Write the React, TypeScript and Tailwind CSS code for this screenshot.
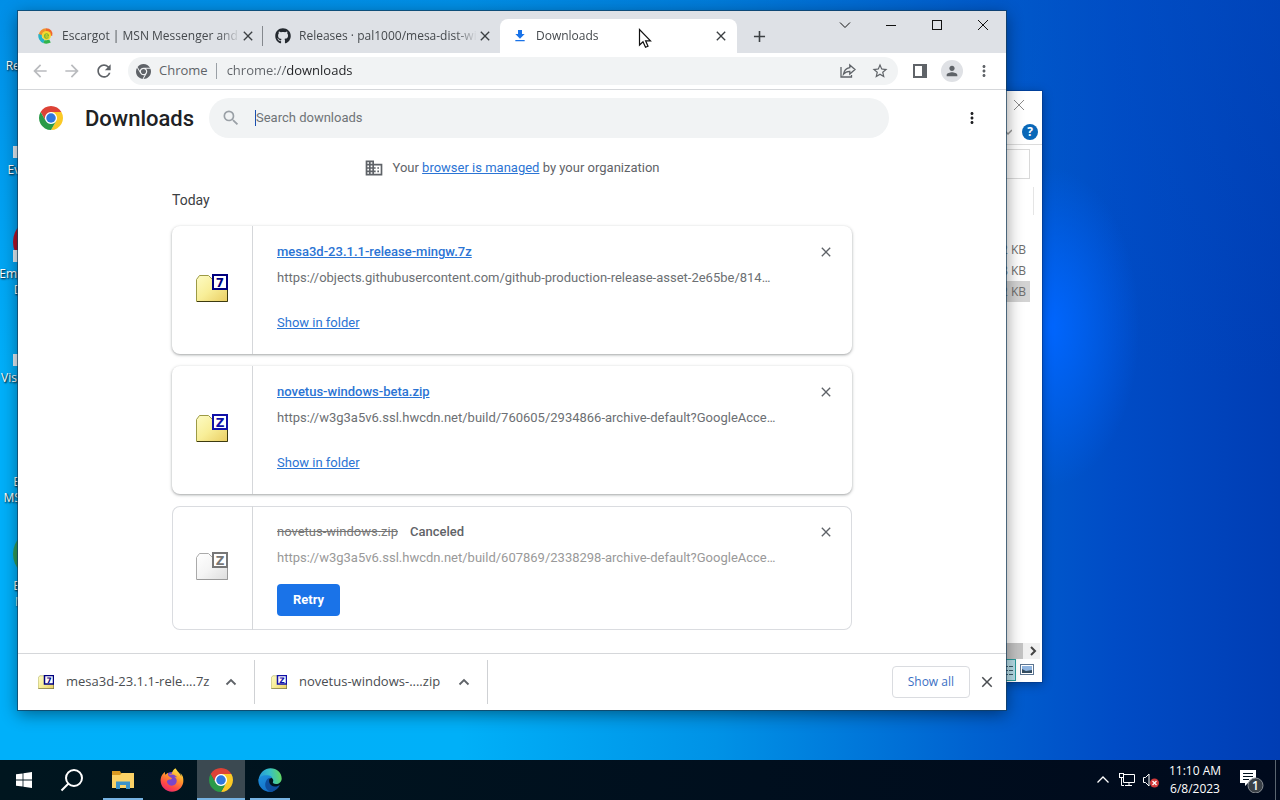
import type { ReactNode } from 'react';
import { FaChrome, FaFirefoxBrowser, FaGithub } from 'react-icons/fa6';
import {
  MdAdd,
  MdArrowBack,
  MdArrowForward,
  MdClose,
  MdDomain,
  MdFileDownload,
  MdMoreVert,
  MdPerson,
  MdRefresh,
  MdSearch,
  MdStarBorder,
} from 'react-icons/md';

interface DownloadEntry {
  name: string;
  url: string;
  letter: string;
  canceled?: boolean;
}

const downloads: DownloadEntry[] = [
  {
    name: 'mesa3d-23.1.1-release-mingw.7z',
    url: 'https://objects.githubusercontent.com/github-production-release-asset-2e65be/814…',
    letter: '7',
  },
  {
    name: 'novetus-windows-beta.zip',
    url: 'https://w3g3a5v6.ssl.hwcdn.net/build/760605/2934866-archive-default?GoogleAcce…',
    letter: 'Z',
  },
  {
    name: 'novetus-windows.zip',
    url: 'https://w3g3a5v6.ssl.hwcdn.net/build/607869/2338298-archive-default?GoogleAcce…',
    letter: 'Z',
    canceled: true,
  },
];

const shortcuts = [
  { label: ['Recycle Bin'], icon: '' },
  { label: ['Everything'], icon: '', arrow: true },
  { label: ['Embarcadero', 'Dev-C++'], icon: 'bg-[#b3122a]', arrow: true },
  { label: ['Visual Studio'], icon: '', arrow: true },
  { label: ['Escargot', 'MSN Clients'], icon: '' },
  { label: ['Escargot', 'Msn 7.5'], icon: 'bg-[#2f9e5b]' },
];

function ChromeLogo({ size }: { size: number }) {
  return (
    <svg width={size} height={size} viewBox="0 0 48 48">
      <circle cx="24" cy="24" r="14" fill="#fff" />
      <path d="M24 12H44.78A24 24 0 0 0 3.22 12L13.6 30A12 12 0 0 1 24 12z" fill="#dd4236" />
      <path d="M24 12H44.78A24 24 0 0 1 24 48L34.4 30A12 12 0 0 0 24 12z" fill="#fbc926" />
      <path d="M34.4 30L24 48A24 24 0 0 1 3.22 12L13.6 30A12 12 0 0 0 34.4 30z" fill="#2b9a48" />
      <circle cx="24" cy="24" r="9.5" fill="#2f77dd" />
    </svg>
  );
}

function ArchiveIcon({ letter, gray, small }: { letter: string; gray?: boolean; small?: boolean }) {
  const blue = letter === 'Z' ? '#1111a8' : '#00007f';
  const frame = gray ? '#777' : blue;
  const width = small ? 16 : 32;
  return (
    <svg width={width} height={(width * 28) / 32} viewBox="0 0 32 28">
      <defs>
        <linearGradient id={gray ? 'folderGray' : 'folderYellow'} x1="0" y1="0" x2="1" y2="1">
          <stop offset="0" stopColor={gray ? '#fff' : '#fdfbc4'} />
          <stop offset="0.5" stopColor={gray ? '#f4f4f4' : '#f8ee98'} />
          <stop offset="1" stopColor={gray ? '#ddd' : '#e9cd62'} />
        </linearGradient>
      </defs>
      <path
        d="M.5 5.500L3.500 1.500H12.500L16.500 5.500H31.500V27.500H.5z"
        fill={gray ? 'url(#folderGray)' : 'url(#folderYellow)'}
        stroke={gray ? '#aaa' : '#9c9a45'}
      />
      <path d="M1 27.500H31.500V15" fill="none" stroke={gray ? '#999' : '#3c3a10'} />
      <rect
        x={small ? 13 : 17}
        y="1"
        width={small ? 18 : 14}
        height={small ? 17 : 14}
        fill="#fff"
        stroke={frame}
        strokeWidth={small ? 3 : 2}
      />
      <text
        x={small ? 22 : 24}
        y={small ? 15.5 : 12.5}
        textAnchor="middle"
        fontFamily="DejaVu Sans, sans-serif"
        fontWeight="bold"
        fontSize={small ? 15 : 12}
        fill={frame}
      >
        {letter}
      </text>
    </svg>
  );
}

function EscargotIcon() {
  return (
    <svg width="16" height="16" viewBox="0 0 16 16" fill="none" strokeWidth="3.500">
      <path d="M8 2A6 6 0 0 0 2.300 7" stroke="#f0922b" />
      <path d="M2.200 6.500A6 6 0 0 0 6 13.500" stroke="#27b3c9" />
      <path d="M6 13.500C8.500 14.500 10 14 12 13" stroke="#31b44b" />
      <path d="M8 2C11.500 2 13.500 4.500 12.500 7.500" stroke="#f0672e" />
      <circle cx="8.500" cy="7.500" r="4.500" fill="#f5da2e" />
      <path d="M6.500 8H10.500C10.500 5 6.800 5 6.500 8C6.500 10.500 9 10.500 10.500 9.500" stroke="#7db82f" strokeWidth="1.200" />
    </svg>
  );
}

function EdgeLogo() {
  return (
    <svg width="24" height="24" viewBox="0 0 24 24">
      <defs>
        <linearGradient id="waveTop" x1="0" y1="0.6" x2="1" y2="0.5">
          <stop offset="0" stopColor="#2596d8" />
          <stop offset="0.5" stopColor="#35bfc9" />
          <stop offset="1" stopColor="#62d860" />
        </linearGradient>
        <linearGradient id="waveBody" x1="0.2" y1="0" x2="0.6" y2="1">
          <stop offset="0" stopColor="#1d8fdc" />
          <stop offset="1" stopColor="#1470c8" />
        </linearGradient>
      </defs>
      <path
        d="M.5 12C1.500 4.500 7 .3 12.500 .3C19 .3 23.700 5 23.700 10.500C23.700 14 21 16 18 16C15.500 16 14.300 15 15 13.800C16 12 14.500 9 10.500 8.500C6 8 2.500 9.500 .5 12z"
        fill="url(#waveTop)"
      />
      <path
        d="M.3 12.500C1 8.500 5 6.800 9.500 7.300C13 7.700 14.500 9.300 13.500 10C8.500 11 7.500 15 9 18C10.500 21 15 22 17 22.500C11 26 .8 22.500 .3 12.500z"
        fill="url(#waveBody)"
      />
      <path
        d="M12 9.800C10 13 11.500 18.500 17 18.500C19 18.500 20.500 17.800 21.800 17C20.500 20.500 17 23.300 12.800 23.700C8 22.500 6.500 18 7.500 14.500C8.200 12 9.800 10.200 12 9.800z"
        fill="#0e4f9f"
      />
    </svg>
  );
}

function Tab({ icon, title, active, divider }: { icon: ReactNode; title: string; active?: boolean; divider?: boolean }) {
  return (
    <div
      className={
        active
          ? 'flex h-[34px] w-[237px] min-w-0 items-center rounded-t-lg bg-white pr-2 pl-3'
          : 'flex h-[34px] w-[237px] min-w-0 items-center pl-3'
      }
    >
      <span className="mr-2 flex w-4 shrink-0 justify-center">{icon}</span>
      <span className="min-w-0 flex-1 overflow-hidden text-xs whitespace-nowrap text-[#45494d] [mask-image:linear-gradient(to_right,black_88%,transparent)]">
        {title}
      </span>
      <button aria-label="Close tab" className="shrink-0 text-[#3c4043]">
        <MdClose size={16} />
      </button>
      {!active && <span className={divider ? 'ml-1.5 h-5 w-px bg-[#84888d]' : 'ml-1.5 h-5 w-px'} />}
    </div>
  );
}

function WindowButton({ label, children }: { label: string; children: ReactNode }) {
  return (
    <button aria-label={label} className="flex h-7 w-[46px] items-center justify-center">
      <svg width="12" height="12" viewBox="0 0 12 12" fill="none" stroke="#111">
        {children}
      </svg>
    </button>
  );
}

function ToolbarButton({ label, children }: { label: string; children: ReactNode }) {
  return (
    <button aria-label={label} className="flex size-8 shrink-0 items-center justify-center text-[#5f6368]">
      {children}
    </button>
  );
}

function TabStrip() {
  return (
    <div className="flex h-[42px] shrink-0 bg-[#dee1e6] pl-2">
      <div className="flex min-w-0 flex-1 items-end">
        <Tab icon={<EscargotIcon />} title="Escargot | MSN Messenger and Y" divider />
        <Tab icon={<FaGithub size={16} className="text-[#24292f]" />} title="Releases · pal1000/mesa-dist-win" />
        <Tab icon={<MdFileDownload size={16} className="text-[#1a73e8]" />} title="Downloads" active />
        <button aria-label="New tab" className="flex h-[34px] w-11 shrink-0 items-center justify-center text-[#3c4043]">
          <MdAdd size={19} />
        </button>
      </div>
      <div className="flex shrink-0">
        <WindowButton label="Search tabs">
          <path d="M1 3.500L6 8.500L11 3.500" />
        </WindowButton>
        <WindowButton label="Minimize">
          <path d="M1 6.500H11" />
        </WindowButton>
        <WindowButton label="Maximize">
          <rect x="1.500" y="1.500" width="9" height="9" />
        </WindowButton>
        <WindowButton label="Close">
          <path d="M1 1L11 11M11 1L1 11" />
        </WindowButton>
      </div>
    </div>
  );
}

function Toolbar() {
  return (
    <div className="flex h-[37px] shrink-0 items-center border-b border-[#d5d7da] px-1.5">
      <button aria-label="Back" className="flex size-8 items-center justify-center text-[#b9bbbe]">
        <MdArrowBack size={20} />
      </button>
      <button aria-label="Forward" className="flex size-8 items-center justify-center text-[#b9bbbe]">
        <MdArrowForward size={20} />
      </button>
      <ToolbarButton label="Reload">
        <MdRefresh size={20} />
      </ToolbarButton>
      <div className="mr-1.5 ml-2 flex h-7 min-w-0 flex-1 items-center rounded-full bg-[#f1f3f4] pr-0.5 pl-2">
        <FaChrome size={15} className="text-[#5f6368]" />
        <label htmlFor="omnibox" className="ml-2 text-[13px] text-[#5f6368]">
          Chrome
        </label>
        <span className="mr-2.5 ml-2 h-4 w-px bg-[#9aa0a6]" />
        <input
          id="omnibox"
          defaultValue="chrome://downloads"
          className="min-w-0 flex-1 bg-linear-to-r from-[#5f6368] from-[58px] to-[#202124] to-[58px] bg-clip-text text-[13px] text-transparent outline-none"
        />
        <ToolbarButton label="Share">
          <svg width="16" height="16" viewBox="0 0 16 16" fill="none" stroke="currentColor" strokeWidth="1.300">
            <path d="M1 4V14H11.500V12M9.800 2L15 6.500L9.800 11V8.300C7 8.300 5 9.200 3.500 11.200C4 7.500 6.200 5.200 9.800 4.600z" />
          </svg>
        </ToolbarButton>
        <ToolbarButton label="Bookmark this tab">
          <MdStarBorder size={18} />
        </ToolbarButton>
      </div>
      <ToolbarButton label="Side panel">
        <svg width="14" height="14" viewBox="0 0 14 14">
          <rect x="1" y="1" width="12" height="12" fill="none" stroke="currentColor" strokeWidth="2" />
          <rect x="9" width="5" height="14" fill="currentColor" />
        </svg>
      </ToolbarButton>
      <ToolbarButton label="Profile">
        <span className="rounded-full bg-[#dfe1e5] p-[3px]">
          <MdPerson size={16} />
        </span>
      </ToolbarButton>
      <ToolbarButton label="Menu">
        <MdMoreVert size={18} />
      </ToolbarButton>
    </div>
  );
}

function DownloadCard({ entry }: { entry: DownloadEntry }) {
  const { name, url, letter, canceled } = entry;
  return (
    <div
      className={
        canceled
          ? 'flex h-[124px] rounded-lg bg-white inset-ring inset-ring-[#dadce0]'
          : 'flex h-32 rounded-lg bg-white shadow-[0_1px_2px_rgba(60,64,67,0.3),0_1px_3px_1px_rgba(60,64,67,0.15)]'
      }
    >
      <div className="flex w-[81px] shrink-0 items-center justify-center border-r border-[#d5d7da] pb-1">
        <ArchiveIcon letter={letter} gray={canceled} />
      </div>
      <div className="min-w-0 flex-1 pt-4 pl-6 text-[13px] leading-5">
        <div className="flex items-center justify-between pr-[18px]">
          {canceled ? (
            <p>
              <span className="text-[#777] line-through">{name}</span>
              <span className="ml-3 font-medium text-[#5f6368]">Canceled</span>
            </p>
          ) : (
            <a href="#file" className="font-medium text-[#2b74d4] underline">
              {name}
            </a>
          )}
          <button aria-label="Remove from list" className="text-[#5f6368]">
            <MdClose size={16} />
          </button>
        </div>
        <p className={canceled ? 'mt-1.5 truncate text-[#999]' : 'mt-1.5 truncate text-[#6c6f73]'}>{url}</p>
        {canceled ? (
          <button className="mt-4 h-8 rounded bg-[#1a73e8] px-4 font-bold text-white">Retry</button>
        ) : (
          <a href="#folder" className="mt-[25px] inline-block text-[#2b74d4] underline">
            Show in folder
          </a>
        )}
      </div>
    </div>
  );
}

function DownloadsPage() {
  return (
    <main className="min-h-0 flex-1 overflow-hidden font-[Roboto,sans-serif]">
      <header className="flex h-14 items-center pr-[25px] pl-[21px]">
        <ChromeLogo size={24} />
        <h1 className="ml-[22px] w-[124px] shrink-0 text-[22px] font-medium text-[#202124]">Downloads</h1>
        <label className="flex h-10 max-w-[680px] min-w-0 flex-1 items-center rounded-full bg-[#f1f3f4] pl-3">
          <MdSearch size={20} className="shrink-0 text-[#9aa0a6]" />
          <span className="ml-3.5 h-4 w-px bg-[#1a4fb0]" />
          <input
            type="search"
            aria-label="Search downloads"
            placeholder="Search downloads"
            className="min-w-0 flex-1 text-[13px] outline-none placeholder:text-[#6f7377]"
          />
        </label>
        <button aria-label="More actions" className="ml-auto text-[#202124]">
          <MdMoreVert size={18} />
        </button>
      </header>
      <p className="mt-3 flex h-5 items-center justify-center text-[13px] text-[#5f6368]">
        <MdDomain size={20} className="mr-2" />
        <span>
          Your{' '}
          <a href="#managed" className="text-[#2b74d4] underline">
            browser is managed
          </a>{' '}
          by your organization
        </span>
      </p>
      <section className="mx-auto mt-3 flex max-w-[680px] flex-col">
        <h2 className="mb-4 text-sm text-[#3c4043]">Today</h2>
        <div className="flex flex-col gap-3">
          {downloads.map((entry) => (
            <DownloadCard key={entry.name} entry={entry} />
          ))}
        </div>
      </section>
    </main>
  );
}

function ShelfItem({ name, letter }: { name: string; letter: string }) {
  return (
    <div className="flex h-11 w-[233px] items-center border-r border-[#cfd1d4] pr-4 pl-4">
      <ArchiveIcon letter={letter} small />
      <span className="ml-3 flex-1 text-[13px] whitespace-nowrap text-[#4a4d51]">{name}</span>
      <button aria-label="Download options" className="text-[#5f6368]">
        <svg width="14" height="14" viewBox="0 0 14 14" fill="none" stroke="currentColor" strokeWidth="1.800">
          <path d="M2.500 9.500L7 5L11.500 9.500" />
        </svg>
      </button>
    </div>
  );
}

function DownloadShelf() {
  return (
    <footer className="flex h-[57px] shrink-0 items-center border-t border-[#d5d7da] pr-2.5 pl-1">
      <ShelfItem name="mesa3d-23.1.1-rele....7z" letter="7" />
      <ShelfItem name="novetus-windows-....zip" letter="Z" />
      <button className="ml-auto h-8 rounded border border-[#dadce0] px-[15px] text-xs font-medium text-[#3b6fc4]">
        Show all
      </button>
      <button aria-label="Close shelf" className="ml-2 text-[#4a4d51]">
        <MdClose size={18} />
      </button>
    </footer>
  );
}

function BrowserWindow() {
  return (
    <div className="absolute top-[11px] right-[274px] bottom-[50px] left-[18px] flex flex-col bg-white shadow-[0_0_0_1px_rgba(20,60,90,0.7),0_4px_16px_rgba(0,0,0,0.45)]">
      <TabStrip />
      <Toolbar />
      <DownloadsPage />
      <DownloadShelf />
    </div>
  );
}

function ExplorerWindow() {
  return (
    <div className="absolute top-[91px] right-[238px] bottom-[78px] flex w-[320px] flex-col bg-white text-xs text-[#6d6d6d] shadow-[0_0_0_1px_rgba(0,50,130,0.5),0_2px_10px_rgba(0,0,0,0.35)]">
      <div className="flex h-7 items-center justify-end pr-[17px]">
        <button aria-label="Close folder">
          <svg width="12" height="12" viewBox="0 0 12 12" stroke="#8a8a8a">
            <path d="M1 1L11 11M11 1L1 11" />
          </svg>
        </button>
      </div>
      <div className="flex h-[26px] items-center justify-end gap-2.5 border-b border-[#dcdcdc] pr-1">
        <svg width="8" height="8" viewBox="0 0 8 8" fill="none" stroke="#999" strokeWidth="1.500">
          <path d="M0 2L4 6L8 2" />
        </svg>
        <button aria-label="Help" className="size-4 rounded-full bg-[#0a68b8] text-xs leading-4 font-bold text-white">
          ?
        </button>
      </div>
      <div className="mt-1 mr-3 h-[30px] border border-[#d9d9d9]" />
      <div className="mt-2 mr-2 h-7 border-r border-[#e5e5e5]" />
      <table className="mt-6 mr-3 text-right">
        <tbody>
          <tr className="h-[21px]">
            <td className="pr-1">12 KB</td>
          </tr>
          <tr className="h-[21px]">
            <td className="pr-1">18 KB</td>
          </tr>
          <tr className="h-[21px] bg-[#d3d3d3]">
            <td className="pr-1">12 KB</td>
          </tr>
        </tbody>
      </table>
      <div className="mt-auto mr-0.5 flex h-4 items-center justify-end bg-[#f0f0f0]">
        <span className="h-4 flex-1 bg-[#c4c4c4]" />
        <svg width="17" height="12" viewBox="0 0 17 12" fill="none" stroke="#444" strokeWidth="2">
          <path d="M8 2L12 6L8 10" />
        </svg>
      </div>
      <div className="flex h-[23px] items-start justify-end gap-1 pr-2">
        <svg width="20" height="22" viewBox="0 0 20 22">
          <rect x=".5" y=".5" width="19" height="21" fill="#b9dfea" stroke="#2a9d9d" />
          <path d="M3 7.500H17M3 11.500H17M3 15.500H17" stroke="#3c5a68" strokeDasharray="4 1" />
        </svg>
        <svg width="14" height="22" viewBox="0 0 14 22">
          <rect x=".5" y="5.500" width="13" height="10" fill="#fff" stroke="#5c7591" />
          <rect x="2" y="7" width="10" height="7" fill="#8fb4df" />
          <path d="M2 14V10L6 12L12 11V14z" fill="#334c60" />
        </svg>
      </div>
    </div>
  );
}

function DesktopShortcuts() {
  return (
    <ul className="flex w-[74px] flex-col text-center text-xs text-white [text-shadow:1px_1px_2px_black]">
      {shortcuts.map((item, index) => (
        <li key={index} className="flex h-[104px] flex-col items-center pt-2.5 leading-4 whitespace-nowrap">
          <div className={`${item.icon} flex size-12 shrink-0 items-end rounded-full`}>
            {item.arrow && <span className="mb-1 size-3 bg-[#e3edf5]" />}
          </div>
          {item.label.map((line) => (
            <span key={line}>{line}</span>
          ))}
        </li>
      ))}
    </ul>
  );
}

function TaskbarButton({ label, children }: { label: string; children: ReactNode }) {
  return (
    <button aria-label={label} className="flex h-10 w-12 items-center justify-center">
      {children}
    </button>
  );
}

function Taskbar() {
  return (
    <div className="flex h-10 shrink-0 bg-linear-to-r from-[#00161f] to-[#000a1d] text-white">
      <TaskbarButton label="Start">
        <svg width="16" height="16" viewBox="0 0 16 16" fill="#fff">
          <path d="M0 2.300L6.600 1.400V7.600H0zM7.400 1.300L16 0V7.600H7.400zM0 8.400H6.600V14.600L0 13.700zM7.400 8.400H16V16L7.400 14.800z" />
        </svg>
      </TaskbarButton>
      <TaskbarButton label="Search">
        <svg width="24" height="24" viewBox="0 0 24 24" fill="none" stroke="#fff" strokeWidth="2">
          <circle cx="14" cy="10" r="8" />
          <path d="M8.500 15.500L1.500 22.500" />
        </svg>
      </TaskbarButton>
      <div className="ml-[3px] flex gap-px">
        <button aria-label="File Explorer" className="flex h-10 w-12 flex-col items-center pt-2">
          <svg width="22" height="24" viewBox="0 0 22 24">
            <path d="M0 3H8L9 5H21V20H0z" fill="#d99a22" />
            <path d="M0 7H8L10 5H22V20H0z" fill="#fbd266" />
            <path d="M4 21V13.500H18V21H14V17H8V21z" fill="#3c93c9" />
          </svg>
          <span className="mt-auto h-0.5 w-10 bg-[#76b3e2]" />
        </button>
        <TaskbarButton label="Firefox">
          <svg width="24" height="24" viewBox="0 0 24 24">
            <defs>
              <linearGradient id="flame" x1="0.8" y1="0" x2="0.3" y2="1">
                <stop offset="0" stopColor="#fff04a" />
                <stop offset="0.4" stopColor="#ff9a2b" />
                <stop offset="0.75" stopColor="#ff4a45" />
                <stop offset="1" stopColor="#e8286f" />
              </linearGradient>
            </defs>
            <circle cx="12" cy="12" r="8" fill="#7b46c9" />
            <FaFirefoxBrowser size={24} fill="url(#flame)" />
          </svg>
        </TaskbarButton>
        <button aria-label="Chrome" className="flex h-10 w-12 flex-col items-center bg-[#3b4951] pt-2">
          <ChromeLogo size={24} />
          <span className="mt-auto h-0.5 w-full bg-[#76b3e2]" />
        </button>
        <button aria-label="Edge" className="flex h-10 w-12 flex-col items-center pt-2">
          <EdgeLogo />
          <span className="mt-auto h-0.5 w-10 bg-[#76b3e2]" />
        </button>
      </div>
      <div className="ml-auto flex items-center">
        <button aria-label="Show hidden icons" className="flex w-6 justify-center">
          <svg width="14" height="14" viewBox="0 0 14 14" fill="none" stroke="#fff" strokeWidth="1.300">
            <path d="M1.500 9.500L7 4L12.500 9.500" />
          </svg>
        </button>
        <button aria-label="Network" className="flex w-6 justify-center">
          <svg width="16" height="14" viewBox="0 0 16 14" fill="none" stroke="#fff">
            <path d="M4.500 1.500H15.500V9.500H4.500V4.500M10 9.500V12M6 12.500H13M2.500 4.500V12.500H5" />
            <rect x=".5" y=".5" width="4" height="4" />
          </svg>
        </button>
        <button aria-label="Volume" className="flex w-6 justify-center">
          <svg width="18" height="16" viewBox="0 0 18 16" fill="none" stroke="#fff">
            <path d="M1.500 5.500H3.500L7 2V14L3.500 10.500H1.500z" />
            <circle cx="12.500" cy="11" r="4.500" fill="#d23a3a" stroke="none" />
            <path d="M10.500 9L14.500 13M14.500 9L10.500 13" strokeWidth="1.200" />
          </svg>
        </button>
        <time className="w-16 text-center text-xs leading-[18px]">
          11:10 AM
          <br />
          6/8/2023
        </time>
        <button aria-label="Notifications" className="flex h-10 w-12 items-center justify-center">
          <svg width="25" height="26" viewBox="0 0 25 26">
            <path d="M1 3H17V16H9L6 19V16H1z" fill="#fff" />
            <path d="M4 6.500H14M4 9.500H14M4 12.500H10" stroke="#00101c" />
            <circle cx="16.500" cy="18.500" r="7.500" fill="#3a4047" stroke="#8b9096" />
            <text x="16.500" y="23" textAnchor="middle" fontSize="12" fontWeight="600" fill="#fff">
              1
            </text>
          </svg>
        </button>
        <span className="h-10 w-[5px] border-l border-[#5a6570]" />
      </div>
    </div>
  );
}

export default function App() {
  return (
    <div className="flex h-screen flex-col overflow-hidden font-['Open_Sans',sans-serif]">
      <div className="relative min-h-0 flex-1 overflow-hidden bg-[radial-gradient(ellipse_90px_160px_at_82%_43%,#0066ff,transparent),linear-gradient(to_bottom,rgba(0,80,195,0.35),transparent_50%),linear-gradient(to_right,#00b0fa,#00b0f8_36%,#0092e6_56%,#0062d0_76%,#004cc6_87%,#003db4)]">
        <DesktopShortcuts />
        <ExplorerWindow />
        <BrowserWindow />
        <svg className="absolute top-[28px] left-[638px]" width="14" height="21" viewBox="0 0 14 21">
          <path
            d="M1.500 1.500V17L5 13.700L7.500 19.300L10 18.200L7.600 12.800H12.500z"
            fill="#fff"
            stroke="#111"
            strokeWidth="1.200"
          />
        </svg>
      </div>
      <Taskbar />
    </div>
  );
}
